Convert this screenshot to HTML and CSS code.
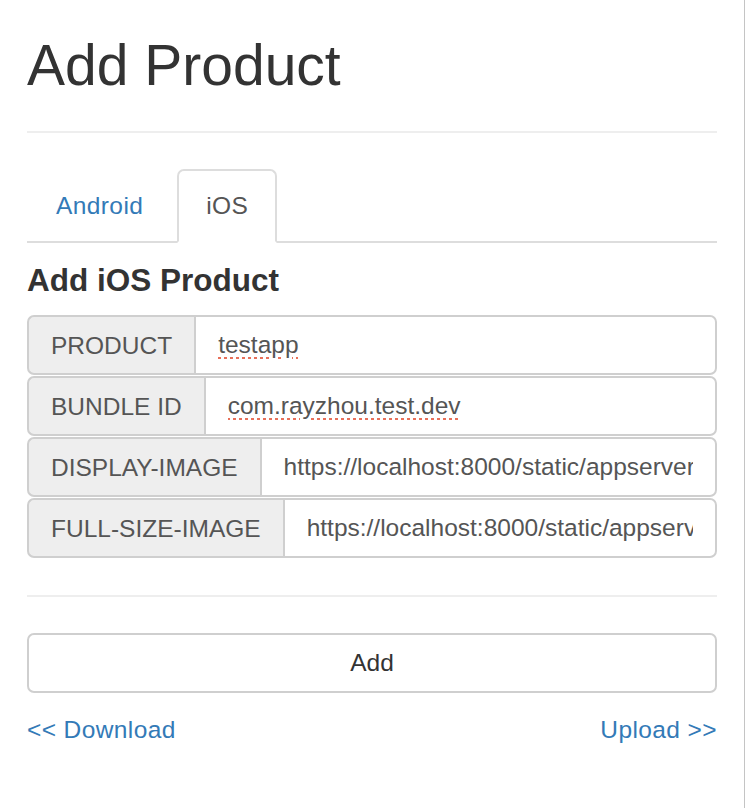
FILE: index.html
```html
<!DOCTYPE html>
<html lang="en">
<head>
<meta charset="utf-8">
<title>Add Product</title>
<link rel="stylesheet" href="styles.css">
</head>
<body>
<div class="page">
  <div class="content">
    <h1 class="title">Add Product</h1>
    <hr class="rule rule-top">
    <ul class="tabs">
      <li class="tab"><a href="#">Android</a></li>
      <li class="tab active"><a href="#">iOS</a></li>
    </ul>
    <h4 class="subtitle">Add iOS Product</h4>
    <form class="form">
      <div class="group">
        <span class="addon">PRODUCT</span>
        <input class="field misspelled" type="text" value="testapp" spellcheck="false">
      </div>
      <div class="group">
        <span class="addon">BUNDLE ID</span>
        <input class="field misspelled" type="text" value="com.rayzhou.test.dev" spellcheck="false">
      </div>
      <div class="group">
        <span class="addon">DISPLAY-IMAGE</span>
        <input class="field" type="text" value="https://localhost:8000/static/appserver/images/display.png" spellcheck="false">
      </div>
      <div class="group">
        <span class="addon">FULL-SIZE-IMAGE</span>
        <input class="field" type="text" value="https://localhost:8000/static/appserver/images/full-size.png" spellcheck="false">
      </div>
      <hr class="rule rule-bottom">
      <button class="btn" type="button">Add</button>
    </form>
    <div class="links">
      <a href="#">&lt;&lt; Download</a>
      <a href="#">Upload &gt;&gt;</a>
    </div>
  </div>
</div>
</body>
</html>
```

FILE: styles.css
```css
* {
  box-sizing: border-box;
}

html, body {
  margin: 0;
  padding: 0;
  background: #fff;
}

body {
  font-family: "Liberation Sans", Arial, sans-serif;
  font-size: 24.5px;
  line-height: 35px;
  color: #333;
}

.page {
  width: 745px;
  min-height: 100vh;
  border-right: 1px solid #c4c4c4;
  padding-left: 27px;
}

.content {
  width: 690px;
  display: flex;
  flex-direction: column;
}

.title {
  margin: 34px 0 0;
  font-size: 57px;
  line-height: 62px;
  font-weight: 400;
  color: #333;
}

.rule {
  margin: 0;
  border: 0;
  border-top: 2px solid #eee;
  height: 0;
}

.rule-top {
  margin-top: 35px;
}

.tabs {
  list-style: none;
  margin: 36px 0 0;
  padding: 0;
  display: flex;
  gap: 5px;
  border-bottom: 2px solid #ddd;
  letter-spacing: 0.4px;
}

.tab {
  margin-bottom: -2px;
}

.tab a {
  display: block;
  padding: 17px 27px;
  line-height: 36px;
  border: 2px solid transparent;
  border-radius: 7px 7px 0 0;
  color: #337ab7;
  text-decoration: none;
}

.tab.active a {
  color: #555;
  background: #fff;
  border-color: #ddd #ddd transparent;
}

.subtitle {
  margin: 20px 0 17px;
  font-size: 31.5px;
  line-height: 35px;
  font-weight: 700;
  color: #333;
}

.form {
  display: flex;
  flex-direction: column;
  gap: 1px;
}

.group {
  display: flex;
  height: 60px;
}

.addon {
  display: flex;
  align-items: center;
  padding: 0 22px 0 22px;
  background: #eee;
  color: #555;
  border: 2px solid #cfcfcf;
  border-right: 0;
  border-radius: 7px 0 0 7px;
  white-space: nowrap;
}

.field {
  flex: 1;
  min-width: 0;
  height: 60px;
  padding: 0 22px;
  font-family: inherit;
  font-size: 24.5px;
  color: #555;
  background: #fff;
  border: 2px solid #cfcfcf;
  border-radius: 0 7px 7px 0;
  outline: none;
}

.misspelled {
  text-decoration: underline dotted #e8705a;
  text-decoration-thickness: 3px;
  text-underline-offset: 4px;
}

.rule-bottom {
  margin-top: 36px;
  margin-bottom: 35px;
}

.btn {
  height: 60px;
  width: 100%;
  font-family: inherit;
  font-size: 24.5px;
  color: #333;
  background: #fff;
  border: 2px solid #cfcfcf;
  border-radius: 7px;
}

.links {
  margin-top: 19px;
  display: flex;
  justify-content: space-between;
  letter-spacing: 0.4px;
}

.links a {
  color: #337ab7;
  text-decoration: none;
}
```
